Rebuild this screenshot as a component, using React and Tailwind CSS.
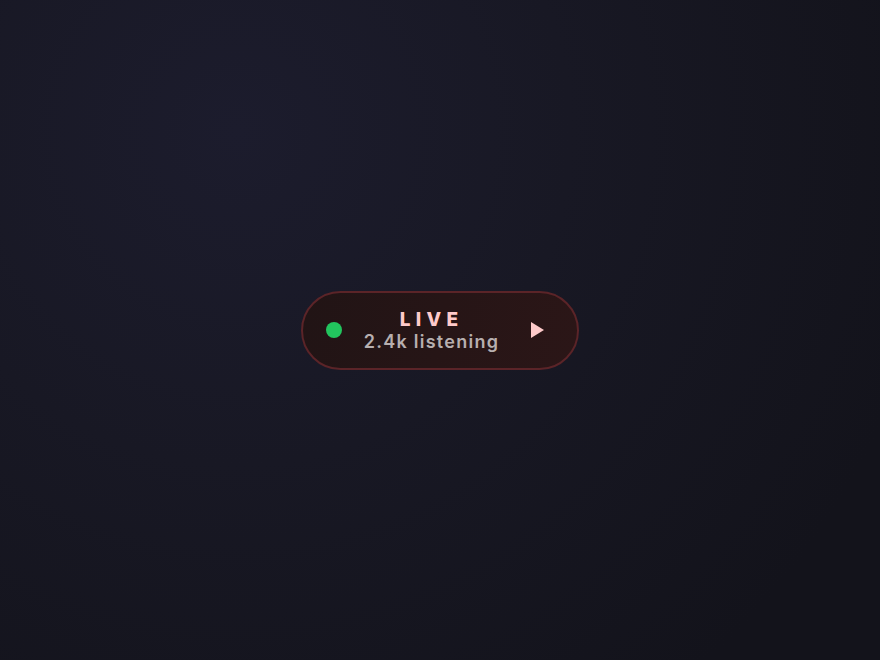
import React from "react";

const LiveBadge = ({ listeners }) => {
  return (
    <div className="flex items-center w-[278px] h-[79px] rounded-full border-2 border-[#5b2428] bg-[linear-gradient(100deg,#211415,#2b1617)] pl-[23px] pr-[33px]">
      <span className="w-4 h-4 rounded-full bg-[#22c55e] shrink-0" />

      <div className="flex-1 ml-[19px] mr-[29px] flex flex-col items-center pt-[1px]">
        <span className="text-[19px] leading-[22px] font-extrabold tracking-[0.28em] text-[#fecaca]">
          LIVE
        </span>
        <span className="text-[18px] leading-[22px] font-semibold tracking-[0.07em] text-[#b7afaf] whitespace-nowrap">
          {listeners} listening
        </span>
      </div>

      <svg width="13" height="16" viewBox="0 0 13 16" className="shrink-0">
        <polygon points="0,0 13,8 0,16" fill="#fecaca" />
      </svg>
    </div>
  );
};

export default function App() {
  return (
    <div
      className="w-full h-screen flex items-center justify-center bg-[radial-gradient(circle_at_27%_20%,#1c1c2d_0%,#181824_40%,#13131b_85%)]"
      style={{ fontFamily: "Inter, 'Noto Sans', sans-serif" }}
    >
      <LiveBadge listeners="2.4k" />
    </div>
  );
}
